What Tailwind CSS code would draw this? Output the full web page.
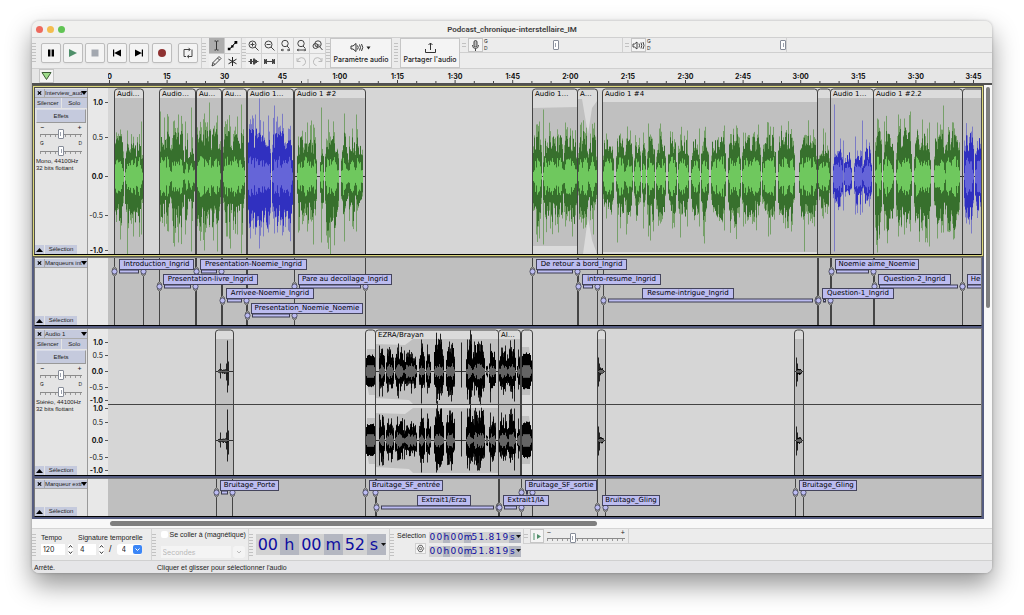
<!DOCTYPE html>
<html lang="fr">

<head>
    <meta charset="UTF-8">
    <meta name="viewport" content="width=device-width, initial-scale=1.0">
    <script src="https://cdn.jsdelivr.net/npm/@tailwindcss/browser@4"></script>
    <title>Podcast_chronique-interstellaire_IM</title>
    <style>
        button {
            cursor: pointer;
        }

        .grip {
            width: 4px;
            flex-shrink: 0;
            align-self: stretch;
            margin-top: 4px;
            margin-bottom: 4px;
            background-image: radial-gradient(#c2c2c2 0.6px, transparent 0.8px);
            background-size: 2px 3px;
        }

        .slider {
            appearance: none;
            display: block;
            width: 100%;
            min-width: 0;
            height: 10px;
            background: repeating-linear-gradient(90deg, #999 0 1px, transparent 1px 5px) 0 6px / 100% 2px no-repeat,
                linear-gradient(#8b8b8b, #8b8b8b) 0 5px / 100% 1px no-repeat;
        }

        .meter {
            background: none;
        }

        .slider::-webkit-slider-thumb {
            appearance: none;
            width: 6px;
            height: 10px;
            border: 1px solid #868c98;
            border-radius: 1px;
            background: linear-gradient(#9aa0ac, #9aa0ac) center / 1px 4px no-repeat, #fff;
        }
    </style>
</head>

<body class="min-h-screen bg-white px-8 pt-[21px] pb-10 font-[Inter,sans-serif] text-[7px] leading-[9px] text-[#222]">
    <div class="overflow-hidden rounded-[7px] bg-[#ececec] shadow-[0_12px_26px_rgba(0,0,0,0.42),0_0_3px_rgba(0,0,0,0.25)]">

        <!-- Title bar -->
        <header class="relative flex h-[17px] items-center border-b border-[#d0d0d0] bg-[#f1f1ef] px-1">
            <div class="flex gap-1">
                <button aria-label="Fermer" class="size-[7px] rounded-full bg-[#ed6a5e]"></button>
                <button aria-label="Réduire" class="size-[7px] rounded-full bg-[#f4bd4f]"></button>
                <button aria-label="Agrandir" class="size-[7px] rounded-full bg-[#61c454]"></button>
            </div>
            <h1 class="absolute inset-x-0 text-center font-[Roboto,sans-serif] text-[8px] font-semibold text-[#3c3c3c]">Podcast_chronique-interstellaire_IM</h1>
        </header>

        <!-- Toolbars -->
        <div class="flex h-[31px] border-b border-[#cfcfcf]">
            <div class="grip"></div>
            <div class="flex items-center gap-[2px] border-r border-[#d0d0d0] pr-[3px] pl-[5px]">
                <button aria-label="Pause" class="size-5 rounded-[2px] border border-[#bdbdbd] bg-[#f4f4f4] shadow-xs">
                    <svg viewBox="0 0 18 18"><path d="M6 5.500h2.400v7H6zM9.600 5.500H12v7H9.600z" fill="#000" /></svg>
                </button>
                <button aria-label="Lecture" class="size-5 rounded-[2px] border border-[#bdbdbd] bg-[#f4f4f4] shadow-xs">
                    <svg viewBox="0 0 18 18"><path d="M5 5l8 4-8 4z" fill="#4f8f6a" /></svg>
                </button>
                <button aria-label="Arrêt" class="size-5 rounded-[2px] border border-[#bdbdbd] bg-[#f4f4f4] shadow-xs">
                    <svg viewBox="0 0 18 18"><path d="M5.500 5.500h7v7h-7z" fill="#a3a8b0" /></svg>
                </button>
                <button aria-label="Début" class="size-5 rounded-[2px] border border-[#bdbdbd] bg-[#f4f4f4] shadow-xs">
                    <svg viewBox="0 0 18 18"><path d="M5 5.500h1.200v7H5zM13 5.500v7L6.200 9z" fill="#000" /></svg>
                </button>
                <button aria-label="Fin" class="size-5 rounded-[2px] border border-[#bdbdbd] bg-[#f4f4f4] shadow-xs">
                    <svg viewBox="0 0 18 18"><path d="M11.800 5.500H13v7h-1.200zM5 5.500v7L11.800 9z" fill="#000" /></svg>
                </button>
                <button aria-label="Enregistrer" class="ml-px size-5 rounded-[2px] border border-[#bdbdbd] bg-[#f4f4f4] shadow-xs">
                    <svg viewBox="0 0 18 18"><circle cx="9" cy="9" r="4" fill="#8f3232" /></svg>
                </button>
                <button aria-label="Boucle" class="ml-1 size-5 rounded-[2px] border border-[#bdbdbd] bg-[#f4f4f4] shadow-xs">
                    <svg viewBox="0 0 18 18" fill="none" stroke="#444"><path d="M7 12.500H5v-7h6M11 12.500h2v-7M9.500 3.800l1.700 1.700-1.700 1.700M13 12.500H8.500M10 10.800l-1.700 1.700 1.700 1.700" /></svg>
                </button>
            </div>

            <!-- Edit tools -->
            <div class="grip"></div>
            <div class="ml-[3px] grid grid-cols-2 grid-rows-2 gap-px bg-[#cacaca]">
                <button aria-label="Outil de sélection" class="w-[15px] bg-[#adadad]">
                    <svg viewBox="0 0 15 15" fill="none" stroke="#333"><path d="M5.500 3h1.500l.5.500.5-.5h1.500M5.500 12h1.500l.5-.5.5.500h1.500M7.500 3.500v8" /></svg>
                </button>
                <button aria-label="Outil d'enveloppe" class="w-[15px] bg-[#f0f0f0]">
                    <svg viewBox="0 0 15 15"><path d="M4 11l3-2 2-3 3-2" fill="none" stroke="#000" /><path d="M2.800 9.700h2.600v2.600H2.800zM6.200 7.200h2.300v2.300H6.200zM9.500 3h2.800v2.800H9.500z" /></svg>
                </button>
                <button aria-label="Outil de dessin" class="w-[15px] bg-[#f0f0f0]">
                    <svg viewBox="0 0 15 15" fill="none" stroke="#333" stroke-width=".9"><path d="M3 12l1-3.500 6-6 2 2-6 6zM8.500 4l2 2M4 8.500l2 2" /></svg>
                </button>
                <button aria-label="Multi-outils" class="w-[15px] bg-[#f0f0f0]">
                    <svg viewBox="0 0 15 15" fill="none" stroke="#222"><path d="M7.500 3v9M3.500 5.200l8 4.600M3.500 9.800l8-4.600" /></svg>
                </button>
            </div>

            <!-- Zoom tools -->
            <div class="ml-px flex border-l border-[#d0d0d0]">
                <div class="grip"></div>
            </div>
            <div class="grid grid-cols-5 grid-rows-2 gap-px bg-[#d2d2d2] pr-px">
                <button aria-label="Zoom avant" class="w-[15px] bg-[#f0f0f0]">
                    <svg viewBox="0 0 15 15" fill="none" stroke="#444"><circle cx="6.500" cy="6.500" r="3.500" /><path d="M9 9l3.500 3.500M4.500 6.500h4M6.500 4.500v4" /></svg>
                </button>
                <button aria-label="Zoom arrière" class="w-[15px] bg-[#f0f0f0]">
                    <svg viewBox="0 0 15 15" fill="none" stroke="#444"><circle cx="6.500" cy="6.500" r="3.500" /><path d="M9 9l3.500 3.500M4.500 6.500h4" /></svg>
                </button>
                <button aria-label="Ajuster à la sélection" class="w-[15px] bg-[#f0f0f0]">
                    <svg viewBox="0 0 15 15" fill="none" stroke="#444"><circle cx="7" cy="5.500" r="3.200" /><path d="M9 8l2.500 2.500M3 12h3M9 12h3M4.500 10.800L3.500 12l1 1.200M10.500 10.800l1 1.200-1 1.200" /></svg>
                </button>
                <button aria-label="Ajuster au projet" class="w-[15px] bg-[#f0f0f0]">
                    <svg viewBox="0 0 15 15" fill="none" stroke="#444"><circle cx="7" cy="5.500" r="3.200" /><path d="M9 8l2.500 2.500M3 12h9M4.500 10.800L3.500 12l1 1.200M10.500 10.800l1 1.200-1 1.200" /></svg>
                </button>
                <button aria-label="Bascule de zoom" class="w-[15px] bg-[#f0f0f0]">
                    <svg viewBox="0 0 15 15" fill="none" stroke="#444"><circle cx="8" cy="6" r="3.200" /><circle cx="5.500" cy="8" r="2.500" /><path d="M9.500 8.500l3 3.500M6.500 7h3" /></svg>
                </button>
                <button aria-label="Rogner" class="w-[15px] bg-[#f0f0f0]">
                    <svg viewBox="0 0 15 15" stroke="#444"><path d="M2.500 7.500h10M4.500 5v5M5.500 5v5M7.500 4.500v6M8.500 4.500v6M9.500 5.500v4M10.500 6v3" /></svg>
                </button>
                <button aria-label="Silence" class="w-[15px] bg-[#f0f0f0]">
                    <svg viewBox="0 0 15 15" stroke="#444"><path d="M5 7.500h5M2.500 5v5M3.500 5.500v4M4.500 5v5M10.500 5v5M11.500 5.500v4M12.500 5v5" /></svg>
                </button>
                <div class="bg-[#ececec]"></div>
                <button aria-label="Annuler" disabled class="w-[15px] bg-[#f0f0f0]">
                    <svg viewBox="0 0 15 15" fill="none" stroke="#bbb"><path d="M3 4v3.500h3.500M3.500 7.500a4 4 0 1 1 5 4" /></svg>
                </button>
                <button aria-label="Rétablir" disabled class="w-[15px] bg-[#f0f0f0]">
                    <svg viewBox="0 0 15 15" fill="none" stroke="#bbb"><path d="M12 4v3.500H8.500M11.500 7.500a4 4 0 1 0-5 4" /></svg>
                </button>
            </div>

            <div class="grip"></div>
            <button class="flex w-[62px] shrink-0 flex-col items-center border border-[#c6c6c6] bg-[#f4f4f4] pt-[3px] whitespace-nowrap">
                <svg width="22" height="11" viewBox="0 0 22 11" fill="none" stroke="#333"><path d="M1 4h2l3-2.500v8L3 7H1zM7.500 3.500q1.500 2 0 4M9.500 2.500q2 3 0 6M11.500 2q2.500 3.500 0 7" /><path d="M16.500 4.500h4L18.500 7.500z" fill="#222" stroke="none" /></svg>
                <span class="mt-[2px] font-medium">Paramètre audio</span>
            </button>
            <div class="grip mx-[2px]"></div>
            <button class="flex w-[60px] shrink-0 flex-col items-center border border-[#c6c6c6] bg-[#f4f4f4] pt-[3px] whitespace-nowrap">
                <svg width="13" height="11" viewBox="0 0 13 11" fill="none" stroke="#333"><path d="M1.500 7v3.500h10V7M6.500 8V1M4.500 3l2-2 2 2" /></svg>
                <span class="mt-[2px] font-medium">Partager l'audio</span>
            </button>

            <!-- Meters -->
            <div class="min-w-0 flex-1">
                <div class="flex h-[15px] border-b border-[#cfcfcf]">
                    <div class="grip mx-[2px]"></div>
                    <button aria-label="Niveau d'enregistrement" class="w-[15px] border border-[#c6c6c6] bg-[#f4f4f4]">
                        <svg viewBox="0 0 13 13" fill="none" stroke="#444"><rect x="5" y="1.500" width="3" height="6.500" rx="1.500" fill="#bbb" /><path d="M3.500 6q0 3.500 3 3.500t3-3.500M6.500 9.500V12" /></svg>
                    </button>
                    <div class="w-[6px] pl-px text-[5px] leading-[7px]">G<br>D</div>
                    <div class="flex w-[134px] items-center border-r border-[#d0d0d0]"><input type="range" aria-label="Volume d'enregistrement" value="50" class="slider meter"></div>
                    <div class="grip mx-[2px]"></div>
                    <button aria-label="Niveau de lecture" class="w-[15px] border border-[#c6c6c6] bg-[#f4f4f4]">
                        <svg viewBox="0 0 13 13" fill="none" stroke="#444"><path d="M1 5h1.500L5 3v7L2.500 8H1zM7 4.500q1 2 0 4M9 3.500q1.500 3 0 6M11 3q2 3.500 0 7" /></svg>
                    </button>
                    <div class="w-[6px] pl-px text-[5px] leading-[7px]">G<br>D</div>
                    <div class="flex w-[135px] items-center border-r border-[#d0d0d0]"><input type="range" aria-label="Volume de lecture" value="100" class="slider meter"></div>
                </div>
            </div>
        </div>

        <!-- Timeline ruler -->
        <div class="flex h-[16px] border-b-2 border-[#505050] bg-[#e6e6e6]">
            <div class="flex w-[76px] shrink-0 justify-center pr-[48px]">
                <button aria-label="Épingler la tête de lecture" class="w-[15px] shrink-0 border border-[#c6c6c6] bg-[#f4f4f4]">
                    <svg viewBox="0 0 13 12"><path d="M2 2.500h9L6.500 9.500z" fill="#9fdc8c" stroke="#3b5c35" /></svg>
                </button>
            </div>
            <svg id="ruler" class="h-[14px] min-w-0 flex-1"></svg>
        </div>

        <!-- Tracks -->
        <main class="flex bg-[#f8f8f8]">
            <div class="min-w-0 flex-1">
                <!-- Interview -->
                <section class="border border-[#5c5c50]">
                    <div class="border border-[#dcd77c]">
                        <div class="flex h-[168px] border border-[#4d4d4d] border-b-black">
                            <div class="track-panel flex w-[53px] shrink-0 flex-col border-r border-[#999] bg-[#e4e4e4]" data-name="Interview_aud" data-info="Mono, 44100Hz"></div>
                            <svg class="scale w-5 shrink-0 bg-[#e8e8e8]" data-scale="mono"></svg>
                            <div id="interview" class="relative min-w-0 flex-1 overflow-hidden bg-[#d6d6d6]"></div>
                        </div>
                    </div>
                </section>
                <!-- Marqueurs interview -->
                <section class="border-x-2 border-b-2 border-[#555c80]">
                    <div class="flex h-[69px] border border-[#777] border-b-black">
                        <div class="track-panel flex w-[53px] shrink-0 flex-col border-r border-[#999] bg-[#e4e4e4]" data-name="Marqueurs int"></div>
                        <div class="w-5 shrink-0 bg-[#e8e8e8]"></div>
                        <div id="markers" class="relative min-w-0 flex-1 overflow-hidden bg-[#bfbfbf]"></div>
                    </div>
                </section>
                <!-- Audio 1 -->
                <section class="border-x-2 border-b-2 border-[#555c80]">
                    <div class="flex h-[148px] border border-[#777] border-b-black">
                        <div class="track-panel flex w-[53px] shrink-0 flex-col border-r border-[#999] bg-[#e4e4e4]" data-name="Audio 1" data-info="Stéréo, 44100Hz"></div>
                        <svg class="scale w-5 shrink-0 bg-[#e8e8e8]" data-scale="stereo"></svg>
                        <div id="audio1" class="relative min-w-0 flex-1 overflow-hidden bg-[#d6d6d6]"></div>
                    </div>
                </section>
                <!-- Marqueur extraits -->
                <section class="border-x-2 border-b-2 border-[#555c80]">
                    <div class="flex h-[39px] border border-[#777] border-b-black">
                        <div class="track-panel flex w-[53px] shrink-0 flex-col border-r border-[#999] bg-[#e4e4e4]" data-name="Marqueur extr"></div>
                        <div class="w-5 shrink-0 bg-[#e8e8e8]"></div>
                        <div id="extracts" class="relative min-w-0 flex-1 overflow-hidden bg-[#bfbfbf]"></div>
                    </div>
                </section>
                <div class="flex h-[9px] items-center pl-[78px]">
                    <div class="h-[5px] w-[487px] rounded-full bg-[#7f7f7f]"></div>
                </div>
            </div>
            <div class="w-2 shrink-0 px-[2px] pt-[2px]">
                <div class="h-[221px] rounded-full bg-[#7f7f7f]"></div>
            </div>
        </main>

        <!-- Bottom toolbars -->
        <div class="flex h-8 border-t border-[#d4d4d4] font-['Liberation_Sans',sans-serif]">
            <div class="grip"></div>
            <div class="flex gap-[5px] border-r border-[#d4d4d4] pt-1 pr-2 pl-[5px]">
                <div>
                    <label for="tempo" class="block">Tempo</label>
                    <div class="mt-[2px] flex items-center gap-[3px]">
                        <input id="tempo" value="120" class="h-[11px] w-6 bg-white pl-[2px] font-[Inter,sans-serif]">
                        <svg width="5" height="11" viewBox="0 0 5 11" class="rounded-xs bg-white" fill="none" stroke="#333"><path d="M.8 3.500l1.700-2 1.700 2M.8 7.500l1.700 2 1.700-2" /></svg>
                    </div>
                </div>
                <div>
                    <label for="beats" class="block whitespace-nowrap">Signature temporelle</label>
                    <div class="mt-[2px] flex items-center gap-[3px]">
                        <input id="beats" value="4" class="h-[11px] w-[18px] bg-white pl-[2px] font-[Inter,sans-serif]">
                        <svg width="5" height="11" viewBox="0 0 5 11" class="rounded-xs bg-white" fill="none" stroke="#333"><path d="M.8 3.500l1.700-2 1.700 2M.8 7.500l1.700 2 1.700-2" /></svg>
                        <span class="px-[2px] text-[9px]">/</span>
                        <div class="relative">
                            <select aria-label="Valeur de note" class="block h-[11px] w-[25px] appearance-none rounded-[3px] bg-white pl-[5px] font-[Inter,sans-serif]">
                                <option>4</option>
                            </select>
                            <svg viewBox="0 0 9 9" class="pointer-events-none absolute top-px right-0 size-[9px] rounded-[2px] bg-[#3b86f7]" fill="none" stroke="#fff"><path d="M2.500 3.500l2 2 2-2" /></svg>
                        </div>
                    </div>
                </div>
            </div>
            <div class="grip"></div>
            <div class="border-r border-[#d4d4d4] pr-[2px] pl-[5px]">
                <label class="flex items-center gap-[2px] pt-px whitespace-nowrap">
                    <input type="checkbox" class="size-[7px] appearance-none rounded-xs bg-white">
                    Se coller à (magnétique)
                </label>
                <div class="mt-[7px] flex gap-[2px] text-[#b8b8b8]">
                    <select aria-label="Unité magnétique" disabled class="h-3 w-[70px] appearance-none bg-[#f4f4f4] pl-[2px] font-[Inter,sans-serif]">
                        <option>Secondes</option>
                    </select>
                    <svg width="12" height="12" viewBox="0 0 12 12" class="rounded-[3px] bg-[#f4f4f4]" fill="none" stroke="#bbb"><path d="M4 5l2 2 2-2" /></svg>
                </div>
            </div>
            <div class="grip"></div>
            <div class="flex items-center border-r border-[#d0d0d0] pr-[3px] pl-[3px]">
                <div class="flex h-[21px] bg-[#d2d2d2] text-center font-['DejaVu_Sans',sans-serif] text-[16px] leading-[21px] whitespace-nowrap text-[#0e0ea0]">
                    <span class="w-6">00</span><span class="w-[19px] bg-[#b4b7c1]">h</span>
                    <span class="w-[25px]">00</span><span class="w-[19px] bg-[#b4b7c1]">m</span>
                    <span class="w-6">52</span><span class="w-[14px] bg-[#b4b7c1]">s</span>
                    <button aria-label="Format" class="flex w-[5px] items-center bg-[#b4b7c1]"><svg width="5" height="3" viewBox="0 0 5 3"><path d="M0 0h5L2.500 3z" fill="#111" /></svg></button>
                </div>
            </div>
            <div class="grip"></div>
            <div class="flex gap-[3px] pr-[2px] pl-1">
                <div class="flex w-7 flex-col items-end pt-[2px]">
                    <span>Sélection</span>
                    <button aria-label="Réglages de la sélection" class="mt-[3px] size-[11px] border border-[#d0d0d0] bg-[#f4f4f4]">
                        <svg viewBox="0 0 10 10" fill="none" stroke="#555"><path d="M3.500 1.500h3l2 3.500-2 3.500h-3L1.500 5z" /><circle cx="5" cy="5" r="1.300" /></svg>
                    </button>
                </div>
                <div class="flex flex-col gap-[3px] pt-[3px] font-['DejaVu_Sans',sans-serif] text-[9px] leading-[11px] text-[#0e0ea0]">
                    <div class="timecode flex h-[11px] bg-[#d2d2d2] text-center">00h00m51.819s</div>
                    <div class="timecode flex h-[11px] bg-[#d2d2d2] text-center">00h00m51.819s</div>
                </div>
            </div>
            <div class="min-w-0 flex-1">
                <div class="flex h-[15px] border-b border-l border-[#d0d0d0]">
                    <div class="grip"></div>
                    <button aria-label="Lecture à vitesse variable" class="ml-[2px] w-[14px] border border-[#c6c6c6] bg-[#f4f4f4]">
                        <svg viewBox="0 0 12 13"><path d="M2.500 3h1v7h-1zM6 4l4 2.500L6 9z" fill="#4f8f6a" /></svg>
                    </button>
                    <div class="relative mx-[3px] w-[78px] pt-1">
                        <span class="absolute -top-px left-0">−</span><span class="absolute -top-px right-0">+</span>
                        <input type="range" aria-label="Vitesse de lecture" value="32" class="slider">
                    </div>
                    <div class="border-l border-[#d0d0d0]"></div>
                </div>
            </div>
        </div>

        <!-- Status bar -->
        <footer class="flex h-[13px] items-center border-t border-[#d0d0d0] bg-[#e6e6e8] pl-[2px] font-['Liberation_Sans',sans-serif]">
            <span class="w-[123px]">Arrêté.</span>
            <span>Cliquer et glisser pour sélectionner l'audio</span>
        </footer>
    </div>

    <script>
        // x values below are counted from the window's edge, the lanes start at LANE
        const LANE = 108;

        // Repeatable noise so that the waveforms are the same at each load
        let seed = 7;
        function rnd() {
            seed = (seed * 16807) % 2147483647;
            return seed / 2147483647;
        }

        // ---- Track control panels ----
        document.querySelectorAll('.track-panel').forEach(function (panel) {
            const name = panel.dataset.name;
            const info = panel.dataset.info;
            let html = `
                <div class="mt-px flex h-[9px] items-center border-b border-[#aaa] bg-[#c5cadd] text-[6px] leading-[8px]">
                    <button aria-label="Supprimer" class="flex w-[10px] shrink-0 justify-center border-r border-[#aaa]"><svg width="5" height="8" viewBox="0 0 5 8" stroke="#000" stroke-width="1.200"><path d="M.8 2.300l3.400 3.400M4.200 2.300L.8 5.700" /></svg></button>
                    <button class="flex min-w-0 flex-1 items-center justify-between whitespace-nowrap font-['Liberation_Sans',sans-serif]"><span>${name}</span><svg width="6" height="4" viewBox="0 0 6 4" class="-ml-1 shrink-0"><path d="M0 0h6L3 4z" /></svg></button>
                </div>`;
            if (info) {
                html += `
                <div class="grid h-[10px] grid-cols-2 gap-px font-['Liberation_Sans',sans-serif] text-[6px] leading-[9px]">
                    <button class="bg-[#c5cadd]">Silencer</button><button class="bg-[#c5cadd]">Solo</button>
                </div>
                <button class="mx-px mt-px h-[14px] border border-[#d8dbe8] border-r-[#999] border-b-[#999] bg-[#c5cadd] font-['Liberation_Sans',sans-serif] text-[6px] leading-[12px]">Effets</button>
                <div class="mt-[2px] flex h-1 justify-between px-[5px] leading-[4px]"><span>−</span><span>+</span></div>
                <div class="px-[5px]"><input type="range" aria-label="Gain ${name}" value="49" class="slider"></div>
                <div class="mt-px flex h-[6px] justify-between px-[5px] text-[5px] leading-[6px]"><span>G</span><span>D</span></div>
                <div class="px-[5px]"><input type="range" aria-label="Panoramique ${name}" value="50" class="slider"></div>
                <p class="mt-[2px] pl-px font-['Liberation_Sans',sans-serif] text-[6px] leading-[7px] whitespace-nowrap">${info}<br>32 bits flottant</p>`;
            }
            html += `
                <div class="mt-auto flex h-[9px] gap-px font-['Liberation_Sans',sans-serif] text-[6px] leading-[9px]">
                    <button aria-label="Réduire la piste" class="flex w-[9px] items-center justify-center bg-[#c5cadd]"><svg width="7" height="4" viewBox="0 0 7 4"><path d="M0 4h7L3.500 0z" /></svg></button>
                    <button class="w-8 bg-[#c5cadd]">Sélection</button>
                </div>`;
            panel.innerHTML = html;
        });

        // ---- Timeline ----
        let ruler = '';
        for (let i = 0; i < 46; i++) {
            const x = 1.500 + i * 19.200;
            if (i % 3 === 0) {
                const s = i * 5;
                const text = s < 60 ? s : Math.floor(s / 60) + ':' + String(s % 60).padStart(2, '0');
                ruler += `<text x="${x}" y="10" text-anchor="middle" font-size="7" font-weight="700" fill="#111">${text}</text>`;
            }
            ruler += `<path d="M${x} ${i % 3 ? 12 : 11}V14" stroke="#444" />`;
        }
        ruler += '<path d="M200 10V14" stroke="#999" />';
        document.getElementById('ruler').innerHTML = ruler;

        // ---- Vertical scales ----
        const scales = {
            mono: [['1.0', 14], ['0.5', 49], ['0.0', 88], ['-0.5', 127], ['-1.0', 162]],
            stereo: [['1.0', 13], ['0.5', 26], ['0.0', 42], ['-0.5', 58], ['-1.0', 71],
                ['1.0', 79], ['0.5', 93], ['0.0', 111], ['-0.5', 128], ['-1.0', 141]],
        };
        document.querySelectorAll('.scale').forEach(function (svg) {
            svg.innerHTML = scales[svg.dataset.scale].map(function ([text, y]) {
                const weight = text.includes('5') ? 400 : 700;
                return `<text x="15" y="${y + 3}" text-anchor="end" font-size="7" font-weight="${weight}" fill="#111">${text}</text>` +
                    `<path d="M17 ${y + 0.5}H20" stroke="#555" />`;
            }).join('');
        });

        // ---- Waveforms ----
        // clip: x0, x1, title, bursts [from, to, up, down], spikes [x, up, down], env (shape of the clip body)
        const interview = [
            { x0: 114, x1: 143, title: 'Audi…', bursts: [[114, 124, 38, 44], [125, 143, 31, 44]], spikes: [[120, 44, 63], [127, 46, 78], [133, 34, 60], [141, 55, 58]] },
            { x0: 159, x1: 195, title: 'Audio…', bursts: [[159, 171, 43, 38], [171, 184, 45, 48], [184, 189, 38, 46], [189, 195, 32, 38]], spikes: [[160, 65, 45], [164, 59, 50], [168, 60, 55], [174, 56, 70], [178, 62, 66], [185, 55, 58], [191, 69, 75]] },
            { x0: 196, x1: 221, title: 'Au…', bursts: [[196, 221, 44, 48]], spikes: [[204, 63, 74], [209, 74, 50], [213, 48, 64], [217, 61, 75]] },
            { x0: 222, x1: 246, title: 'Au…', bursts: [[223, 245, 42, 44]], spikes: [[227, 57, 60], [230, 50, 72], [237, 60, 58], [241, 72, 77]] },
            { x0: 247, x1: 293, title: 'Audio 1…', blue: true, bursts: [[247, 271, 46, 50], [272, 293, 44, 46]], spikes: [[259, 78, 72], [255, 62, 55], [263, 55, 58], [268, 61, 56], [274, 71, 57], [277, 60, 56], [288, 48, 54]] },
            { x0: 294, x1: 365, title: 'Audio 1 #2', bursts: [[297, 317, 36, 40], [320, 324, 36, 42], [325, 339, 38, 50], [341, 348, 42, 40], [348, 356, 36, 42], [355, 363, 36, 30]], spikes: [[298, 40, 56], [307, 54, 55], [311, 56, 45], [313, 52, 68], [321, 69, 66], [328, 57, 48], [330, 40, 78], [344, 63, 65], [352, 48, 50], [356, 62, 55]] },
            { x0: 532, x1: 577, title: 'Audio 1…', env: '0,20 45,19 45,158 0,158', bursts: [[533, 542, 42, 46], [543, 564, 38, 42], [564, 577, 42, 44]], spikes: [[536, 52, 58], [539, 55, 62], [543, 67, 68], [550, 45, 52], [558, 42, 56], [565, 54, 50], [572, 46, 60]] },
            { x0: 577, x1: 597, title: 'A…', env: '0,11 5,11 11,46 15,20 20,13 20,166 15,152 11,130 6,166 0,166', bursts: [[578, 589, 42, 40], [588, 597, 38, 36]], spikes: [[581, 54, 46], [593, 48, 58]] },
            {
                x0: 602, x1: 817, title: 'Audio 1 #4', env: '0,14 215,14 215,164 0,164',
                bursts: [[603, 614, 35, 34], [616, 625, 37, 38], [625, 633, 36, 38], [634, 641, 35, 36], [642, 646, 38, 40], [647, 655, 42, 46], [656, 666, 38, 40], [668, 677, 36, 38], [678, 689, 36, 40], [691, 700, 38, 40], [701, 709, 38, 42], [711, 726, 36, 42], [728, 741, 42, 44], [742, 761, 38, 38], [762, 776, 38, 40], [778, 795, 42, 42], [799, 817, 38, 40]],
                spikes: [[606, 43, 42], [617, 38, 66], [626, 38, 58], [630, 46, 40], [643, 44, 52], [648, 53, 60], [650, 42, 64], [659, 48, 44], [672, 40, 52], [680, 42, 61], [687, 46, 50], [699, 48, 50], [704, 45, 67], [724, 51, 54], [736, 51, 46], [743, 44, 50], [753, 43, 45], [768, 54, 60], [770, 50, 58], [785, 44, 52], [804, 40, 75], [808, 42, 40]],
            },
            { x0: 817, x1: 830, title: '', bursts: [[818, 830, 30, 32]], spikes: [[823, 48, 42], [825, 44, 36]] },
            { x0: 830, x1: 873, title: 'Audio 1…', blue: true, bursts: [[833, 843, 26, 28], [844, 852, 22, 22], [854, 863, 22, 26], [863, 872, 28, 26]], spikes: [[834, 72, 75], [840, 38, 30], [843, 36, 34], [855, 40, 38], [862, 56, 36], [869, 34, 30]] },
            { x0: 873, x1: 962, title: 'Audio 1 #2.2', bursts: [[875, 882, 50, 62], [883, 894, 42, 50], [896, 912, 46, 50], [914, 931, 42, 50], [934, 945, 40, 46], [945, 960, 42, 50]], spikes: [[877, 58, 76], [884, 55, 54], [898, 62, 60], [904, 58, 58], [910, 65, 55], [922, 57, 54], [927, 48, 66], [929, 54, 70], [937, 54, 52], [943, 71, 56], [953, 54, 63]] },
            { x0: 962, x1: 990, title: '', blue: true, bursts: [[964, 974, 42, 40], [975, 983, 36, 32]], spikes: [[966, 47, 44]] },
        ];

        const audio1 = [
            { x0: 215, x1: 233, title: '', bursts: [[218, 229, 2, 2]], spikes: [[220, 8, 7], [226, 8, 9], [227, 31, 21], [228, 10, 14]] },
            { x0: 365, x1: 375, title: '', flat: true, env: '0,44 2,20 10,20 10,66 4,66 0,44', bursts: [[365, 376, 16, 15]], spikes: [] },
            {
                x0: 375, x1: 498, title: 'EZRA/Brayan', env: '0,15 30,16 38,10 123,10 123,75 38,75 34,71 0,69',
                bursts: [[379, 385, 22, 20], [386, 394, 19, 18], [395, 404, 19, 18], [404, 417, 16, 15], [419, 425, 23, 21], [426, 431, 21, 18], [434, 444, 30, 26], [446, 455, 28, 22], [466, 473, 31, 28], [473, 485, 27, 23], [486, 488, 10, 10], [489, 496, 21, 21]],
                spikes: [[379, 26, 25], [382, 23, 25], [388, 22, 20], [397, 24, 20], [404, 21, 19], [421, 32, 32], [427, 27, 22], [436, 32, 32], [441, 32, 24], [449, 30, 24], [451, 27, 30], [461, 29, 16], [467, 32, 28], [469, 32, 30], [474, 30, 24], [479, 28, 30], [490, 28, 31]],
            },
            { x0: 498, x1: 520, title: 'AI…', bursts: [[499, 508, 20, 17], [508, 516, 24, 20], [517, 521, 14, 13]], spikes: [[501, 24, 18], [505, 26, 20], [510, 31, 20], [514, 32, 30], [518, 22, 18]] },
            { x0: 521, x1: 532, title: '', flat: true, env: '0,18 8,18 11,42 9,66 0,66', bursts: [[521, 532, 18, 17]], spikes: [] },
            { x0: 597, x1: 605, title: '', bursts: [[598, 604, 3, 3]], spikes: [[598, 14, 15], [599, 8, 10]] },
            { x0: 794, x1: 803, title: '', bursts: [[796, 802, 3, 3]], spikes: [[796, 14, 15], [797, 8, 10]] },
        ];

        // One column per pixel: pale peaks, dark body, bright RMS core
        function wave(clip, cy, colors, core) {
            let pale = '', dark = '', rms = '';
            clip.bursts.forEach(function ([a, b, up, down]) {
                for (let x = a; x < b; x++) {
                    const edge = Math.min(x - a, b - 1 - x);
                    const taper = edge === 0 ? 0.6 : edge === 1 ? 0.88 : 1;
                    const coreTaper = edge === 0 ? 0.35 : edge === 1 ? 0.7 : 1;
                    const n = clip.flat ? 0.95 + rnd() * 0.1 : 0.6 + rnd() * 0.5;
                    const m = clip.flat ? 0.95 + rnd() * 0.1 : 0.6 + rnd() * 0.5;
                    const u = up * n * taper;
                    const d = down * m * taper;
                    const px = x - LANE + 0.5;
                    const extra = clip.flat ? 1 : 1 + Math.pow(rnd(), 2) * 0.4;
                    const r = Math.min(core * (clip.flat ? 0.9 : 0.5 + rnd() * 0.7) * coreTaper, u * 0.6);
                    pale += `M${px} ${(cy - u * extra).toFixed(1)}V${(cy + d * extra).toFixed(1)}`;
                    dark += `M${px} ${(cy - u).toFixed(1)}V${(cy + d).toFixed(1)}`;
                    rms += `M${px} ${(cy - r).toFixed(1)}V${(cy + r).toFixed(1)}`;
                }
            });
            clip.spikes.forEach(function ([x, up, down]) {
                pale += `M${x - LANE + 0.5} ${cy - up}V${cy + down}`;
            });
            return `<path d="M${clip.x0 - LANE} ${cy}H${clip.x1 - LANE + 1}" stroke="#333" />` +
                `<path d="${pale}" stroke="${colors[0]}" /><path d="${dark}" stroke="${colors[1]}" /><path d="${rms}" stroke="${colors[2]}" />`;
        }

        function drawClips(id, clips, height, centers, core) {
            let svg = '';
            let names = '';
            clips.forEach(function (clip) {
                const x = clip.x0 - LANE;
                const w = clip.x1 - clip.x0 + 1;
                svg += `<path d="M${x} ${height}V4q0-3 3-3H${x + w - 3}q3 0 3 3V${height}z" fill="#dbdbdb" />`;
                if (clip.env) {
                    svg += `<polygon transform="translate(${x} 0)" points="${clip.env}" fill="#c0c0c0" />`;
                    if (centers.length > 1) {
                        svg += `<polygon transform="translate(${x} 69)" points="${clip.env}" fill="#c0c0c0" />`;
                    }
                } else {
                    svg += `<rect x="${x}" y="10" width="${w}" height="${height}" fill="#c0c0c0" />`;
                }
                let colors = ['#76a069', '#37702d', '#6fc85e'];
                if (clip.blue) colors = ['#7b7bc6', '#3030c0', '#6565d8'];
                if (centers.length > 1) colors = ['#222', '#000', '#646464'];
                centers.forEach(function (cy) {
                    svg += wave(clip, cy, colors, core);
                });
                svg += `<path d="M${x + 0.5} ${height}V4q0-3 3-3H${x + w - 3.5}q3 0 3 3V${height}" fill="none" stroke="#444" />`;
                if (clip.title) {
                    names += `<span class="absolute top-px whitespace-nowrap font-['DejaVu_Sans',sans-serif] text-[7px] leading-[10px] text-black" style="left:${x + 3}px">${clip.title}</span>`;
                }
            });
            if (centers.length > 1) svg += '<path d="M0 75.500H2000" stroke="#444" />';
            document.getElementById(id).innerHTML = `<svg class="block h-full w-full">${svg}</svg>${names}`;
        }

        drawClips('interview', interview, 166, [88.5], 17);
        drawClips('audio1', audio1, 146, [42.5, 111.5], 7);

        // ---- Label tracks ----
        // [text, box left, box width, region start, region end, row]
        const markers = [
            ['Introduction_Ingrid', 119, 75, 114, 143, 0],
            ['Presentation-Noemie_Ingrid', 200, 107, 196, 221, 0],
            ['Presentation-livre_Ingrid', 163, 95, 159, 195, 1],
            ['Pare au decollage_Ingrid', 298, 94, 294, 365, 1],
            ['Arrivee-Noemie_Ingrid', 226, 88, 222, 246, 2],
            ['Presentation_Noemie_Noemie', 251, 112, 247, 294, 3],
            ['De retour a bord_Ingrid', 536, 91, 532, 577, 0],
            ['intro-resume_Ingrid', 582, 79, 578, 597, 1],
            ['Resume-intrigue_Ingrid', 642, 92, 603, 817, 2],
            ['Noemie aime_Noemie', 835, 84, 831, 873, 0],
            ['Question-2_Ingrid', 878, 73, 874, 962, 1],
            ['Question-1_Ingrid', 822, 72, 818, 830, 2],
            ['He', 967, 17, 962, 990, 1],
        ];
        const extracts = [
            ['Bruitage_Porte', 220, 59, 216, 232, 0],
            ['Bruitage_SF_entrée', 369, 74, 365, 375, 0],
            ['Extrait1/Erza', 417, 54, 376, 498, 1],
            ['Bruitage_SF_sortie', 525, 72, 521, 532, 0],
            ['Extrait1/IA', 503, 46, 499, 521, 1],
            ['Bruitage_Gling', 602, 58, 597, 605, 1],
            ['Bruitage_Gling', 799, 58, 795, 803, 0],
        ];

        function drawLabels(id, labels) {
            let lines = '';
            let regions = '';
            let boxes = '';
            labels.forEach(function ([text, left, width, start, end, row]) {
                const top = 1 + Math.round(row * 14.600);
                const y = top + 12.500;
                const a = start - LANE + 0.5;
                const b = end - LANE + 0.5;
                lines += `<path d="M${a} 0V80M${b} 0V80" stroke="#444" />`;
                if (b - a > 10) {
                    regions += `<rect x="${a + 5}" y="${y - 1.5}" width="${b - a - 10}" height="3" fill="#bcbcf2" stroke="#3c3c50" />`;
                }
                [a, b].forEach(function (x) {
                    regions += `<path d="M${x} ${y - 5}l2 2v6l-2 2-2-2v-6z" fill="#999" stroke="#555" stroke-width=".7" />` +
                        `<circle cx="${x}" cy="${y}" r="2.600" fill="#bcbcf2" stroke="#3c3c50" stroke-width=".8" />`;
                });
                boxes += `<span class="absolute h-[11px] overflow-hidden border border-[#44445c] bg-[#bcbcf0] text-center font-['DejaVu_Sans',sans-serif] text-[7px] leading-[9px] whitespace-nowrap text-black" style="left:${left - LANE}px;top:${top}px;width:${width}px">${text}</span>`;
            });
            document.getElementById(id).innerHTML = `<svg class="block h-full w-full">${lines}${regions}</svg>${boxes}`;
        }

        drawLabels('markers', markers);
        drawLabels('extracts', extracts);

        // ---- Time fields: one cell per character ----
        document.querySelectorAll('.timecode').forEach(function (field) {
            field.innerHTML = field.textContent.split('').map(function (c) {
                if (c === '.') return '<span class="w-[3px]">.</span>';
                if (/[hms]/.test(c)) return `<span class="w-[7px] bg-[#b4b7c1]">${c}</span>`;
                return `<span class="w-[7px]">${c}</span>`;
            }).join('') + '<button aria-label="Format" class="flex w-[5px] bg-[#b4b7c1] pt-[3px]"><svg width="5" height="3" viewBox="0 0 5 3"><path d="M0 0h5L2.500 3z" fill="#111" /></svg></button>';
        });
    </script>
</body>

</html>
